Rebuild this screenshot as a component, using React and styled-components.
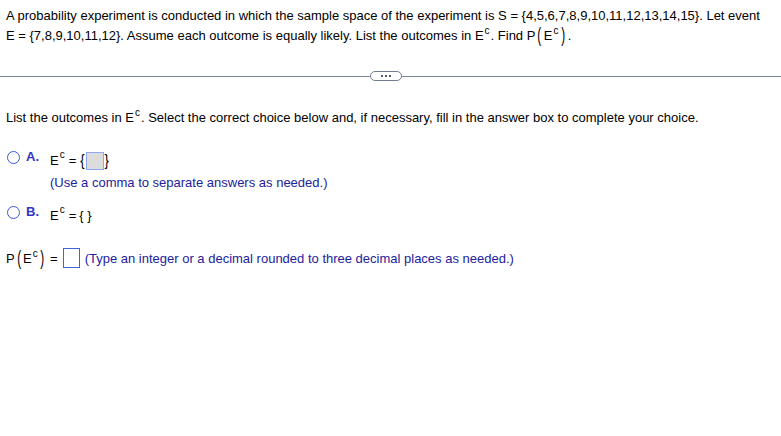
import React from 'react';
import styled, { createGlobalStyle } from 'styled-components';

const GlobalStyle = createGlobalStyle`
  html, body {
    margin: 0;
    padding: 0;
    background: #ffffff;
  }
  body {
    font-family: "Liberation Sans", Arial, sans-serif;
    font-size: 13px;
    color: #000;
  }
`;

const Page = styled.div`
  width: 781px;
  height: 436px;
  overflow: hidden;
`;

const Question = styled.p`
  margin: 0;
  padding: 6px 6px 0 6px;
  line-height: 20px;
`;

const Sup = styled.span`
  position: relative;
  top: -6px;
  font-size: 10px;
  margin-left: 1px;
  margin-right: 1px;
`;

const Paren = styled.span`
  display: inline-block;
  font-size: 13px;
  line-height: 13px;
  font-weight: 300;
  transform: scale(0.9, 1.55);
  margin: 0 ${(p) => p.$m ?? 2}px;
`;

const Divider = styled.div`
  display: flex;
  align-items: center;
  margin-top: 24px;
  height: 10px;
`;

const Rule = styled.div`
  flex: ${(p) => p.$grow};
  height: 1px;
  background: #7a889c;
`;

const DotsButton = styled.div`
  width: 30px;
  height: 8px;
  border: 1px solid #6f7d92;
  border-radius: 5px;
  display: flex;
  align-items: center;
  justify-content: center;
  gap: 2px;

  span {
    width: 2px;
    height: 2px;
    background: #4f5c70;
  }
`;

const Instruction = styled.p`
  margin: 28px 0 0 0;
  padding: 0 6px;
  line-height: 18px;
`;

const Choices = styled.div`
  margin-top: 22px;
  padding-left: 7px;
  display: flex;
  flex-direction: column;
  gap: 15px;
`;

const Choice = styled.div`
  display: flex;
  align-items: flex-start;
`;

const Radio = styled.span`
  width: 11px;
  height: 11px;
  border: 1.5px solid #3a5ad8;
  border-radius: 50%;
  margin-top: 1px;
  flex-shrink: 0;
`;

const Letter = styled.span`
  color: #3333cc;
  font-weight: bold;
  margin-left: 6px;
  width: 24px;
  line-height: 14px;
`;

const ChoiceBody = styled.div`
  display: flex;
  flex-direction: column;
  gap: 5px;
  padding-top: 2px;
`;

const Expr = styled.div`
  display: flex;
  align-items: center;
  line-height: 18px;
`;

const Brace = styled.span`
  display: inline-block;
  margin: 0 1px;
  transform: scaleY(1.3);
`;

const AnswerBox = styled.span`
  display: inline-block;
  width: ${(p) => p.$w}px;
  height: ${(p) => p.$h}px;
  border: 1px solid ${(p) => (p.$filled ? '#8fa8ee' : '#3f63d8')};
  background: ${(p) => (p.$filled ? '#dcdcdc' : '#ffffff')};
  box-sizing: border-box;
`;

const Hint = styled.span`
  color: #22229c;
  margin-left: ${(p) => p.$ml ?? 0}px;
`;

const ProbRow = styled.div`
  margin-top: 23px;
  padding-left: 6px;
  display: flex;
  align-items: center;
`;

const Eq = styled.span`
  margin: 0 ${(p) => p.$m ?? 3}px;
`;

const Ec = () => (
  <>
    E<Sup>c</Sup>
  </>
);

export default function App() {
  return (
    <Page>
      <GlobalStyle />
      <Question>
        A probability experiment is conducted in which the sample space of the experiment is S = {'{'}4,5,6,7,8,9,10,11,12,13,14,15{'}'}. Let event
        <br />
        E = {'{'}7,8,9,10,11,12{'}'}. Assume each outcome is equally likely. List the outcomes in <Ec />. Find P<Paren>(</Paren><Ec /><Paren>)</Paren>.
      </Question>

      <Divider>
        <Rule $grow={370} />
        <DotsButton>
          <span />
          <span />
          <span />
        </DotsButton>
        <Rule $grow={379} />
      </Divider>

      <Instruction>
        List the outcomes in <Ec />. Select the correct choice below and, if necessary, fill in the answer box to complete your choice.
      </Instruction>

      <Choices>
        <Choice>
          <Radio />
          <Letter>A.</Letter>
          <ChoiceBody>
            <Expr>
              <Ec />
              <Eq>=</Eq>
              <Brace>{'{'}</Brace>
              <AnswerBox $w={18} $h={18} $filled />
              <Brace>{'}'}</Brace>
            </Expr>
            <Hint>(Use a comma to separate answers as needed.)</Hint>
          </ChoiceBody>
        </Choice>
        <Choice>
          <Radio />
          <Letter>B.</Letter>
          <ChoiceBody>
            <Expr>
              <Ec />
              <Eq>=</Eq>
              {'{ }'}
            </Expr>
          </ChoiceBody>
        </Choice>
      </Choices>

      <ProbRow>
        <span>
          P<Paren $m={2}>(</Paren><Ec /><Paren $m={1}>)</Paren>
        </span>
        <Eq $m={5}>=</Eq>
        <AnswerBox $w={17} $h={20} />
        <Hint $ml={5}>(Type an integer or a decimal rounded to three decimal places as needed.)</Hint>
      </ProbRow>
    </Page>
  );
}
